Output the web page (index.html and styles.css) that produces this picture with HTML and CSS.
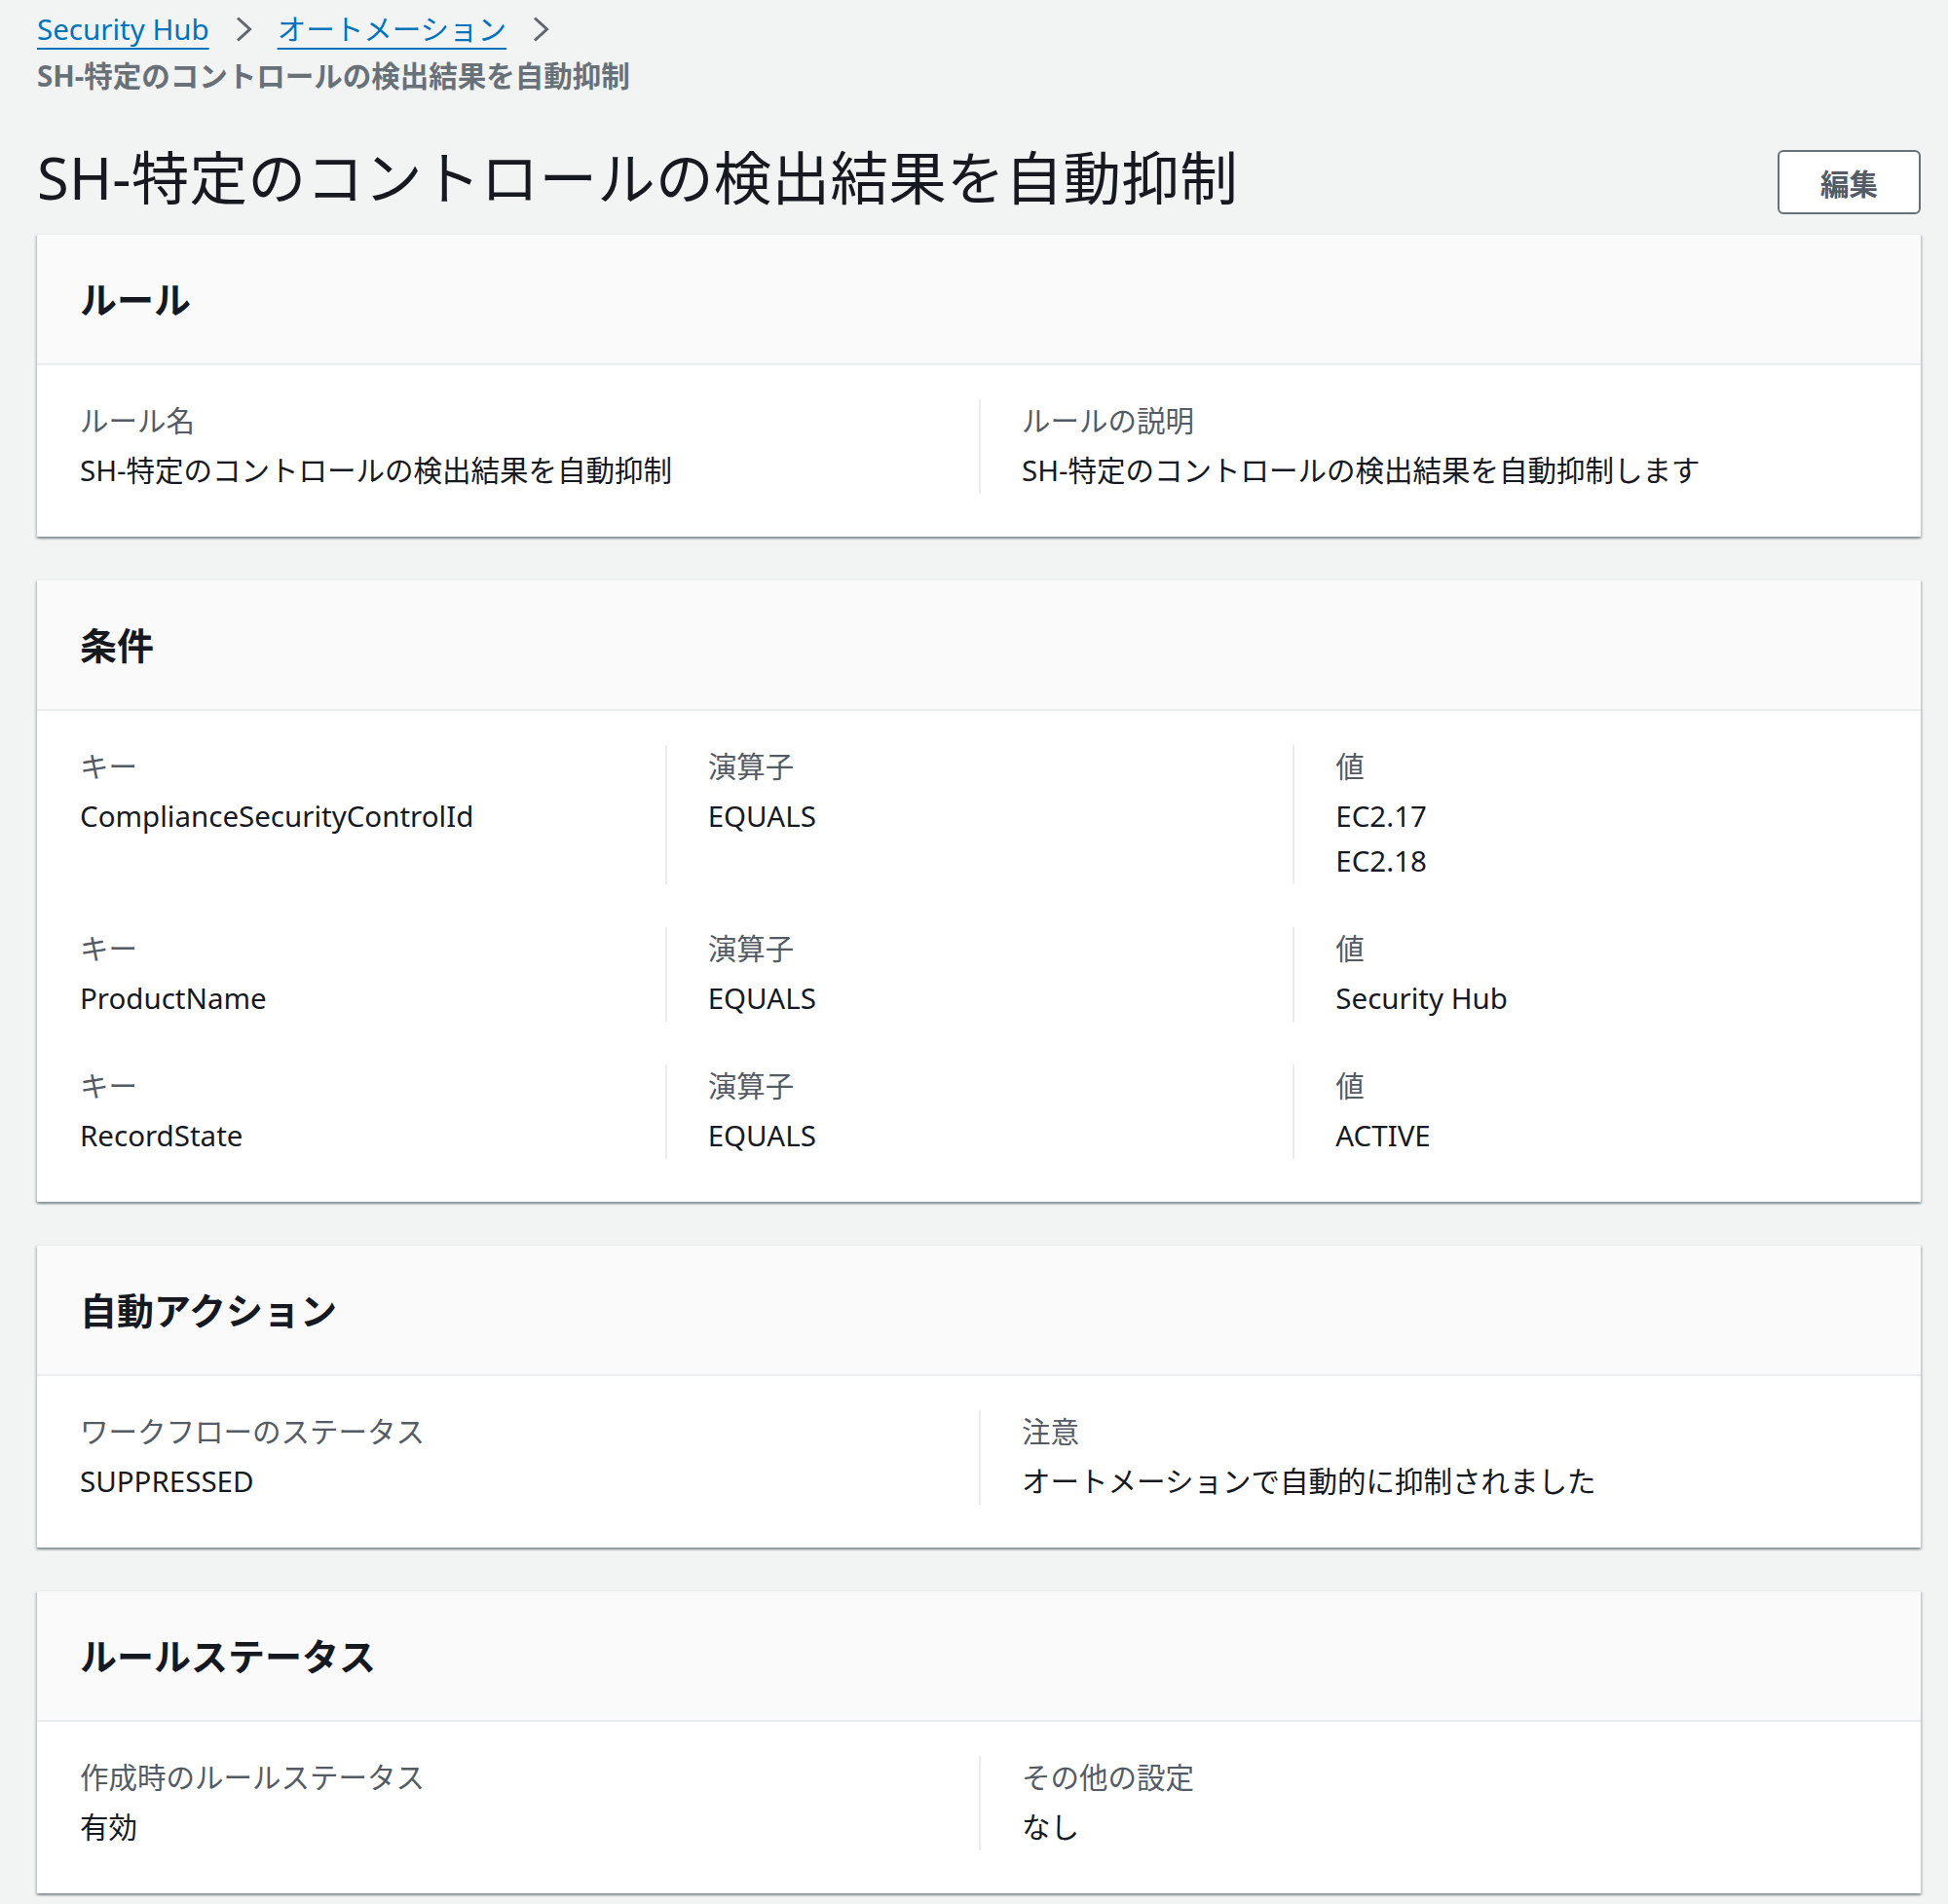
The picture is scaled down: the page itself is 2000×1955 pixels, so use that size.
FILE: index.html
```html
<!DOCTYPE html>
<html lang="ja">
<head>
<meta charset="utf-8">
<title>SH-特定のコントロールの検出結果を自動抑制</title>
<link rel="stylesheet" href="styles.css">
</head>
<body>
<div class="page">
  <nav class="crumbs">
    <div class="crumbs-line">
      <a class="crumb-link" href="#">Security Hub</a>
      <svg class="chev" width="20" height="28" viewBox="0 0 20 28"><polyline points="4,2.5 16.5,14 4,25.5" fill="none" stroke="#5f666d" stroke-width="3"/></svg>
      <a class="crumb-link" href="#">オートメーション</a>
      <svg class="chev" width="20" height="28" viewBox="0 0 20 28"><polyline points="4,2.5 16.5,14 4,25.5" fill="none" stroke="#5f666d" stroke-width="3"/></svg>
    </div>
    <div class="crumb-current">SH-特定のコントロールの検出結果を自動抑制</div>
  </nav>

  <header class="page-header">
    <h1>SH-特定のコントロールの検出結果を自動抑制</h1>
    <button class="btn">編集</button>
  </header>

  <section class="card">
    <div class="card-header"><h2>ルール</h2></div>
    <div class="card-body">
      <div class="grid two">
        <div class="cell">
          <div class="label">ルール名</div>
          <div class="value">SH-特定のコントロールの検出結果を自動抑制</div>
        </div>
        <div class="cell div">
          <div class="label">ルールの説明</div>
          <div class="value">SH-特定のコントロールの検出結果を自動抑制します</div>
        </div>
      </div>
    </div>
  </section>

  <section class="card">
    <div class="card-header"><h2>条件</h2></div>
    <div class="card-body">
      <div class="grid three">
        <div class="cell">
          <div class="label">キー</div>
          <div class="value">ComplianceSecurityControlId</div>
        </div>
        <div class="cell div">
          <div class="label">演算子</div>
          <div class="value">EQUALS</div>
        </div>
        <div class="cell div">
          <div class="label">値</div>
          <div class="value">EC2.17</div>
          <div class="value">EC2.18</div>
        </div>

        <div class="cell">
          <div class="label">キー</div>
          <div class="value">ProductName</div>
        </div>
        <div class="cell div">
          <div class="label">演算子</div>
          <div class="value">EQUALS</div>
        </div>
        <div class="cell div">
          <div class="label">値</div>
          <div class="value">Security Hub</div>
        </div>

        <div class="cell">
          <div class="label">キー</div>
          <div class="value">RecordState</div>
        </div>
        <div class="cell div">
          <div class="label">演算子</div>
          <div class="value">EQUALS</div>
        </div>
        <div class="cell div">
          <div class="label">値</div>
          <div class="value">ACTIVE</div>
        </div>
      </div>
    </div>
  </section>

  <section class="card">
    <div class="card-header"><h2>自動アクション</h2></div>
    <div class="card-body">
      <div class="grid two">
        <div class="cell">
          <div class="label">ワークフローのステータス</div>
          <div class="value">SUPPRESSED</div>
        </div>
        <div class="cell div">
          <div class="label">注意</div>
          <div class="value">オートメーションで自動的に抑制されました</div>
        </div>
      </div>
    </div>
  </section>

  <section class="card">
    <div class="card-header"><h2>ルールステータス</h2></div>
    <div class="card-body">
      <div class="grid two">
        <div class="cell">
          <div class="label">作成時のルールステータス</div>
          <div class="value">有効</div>
        </div>
        <div class="cell div">
          <div class="label">その他の設定</div>
          <div class="value">なし</div>
        </div>
      </div>
    </div>
  </section>
</div>
</body>
</html>
```

FILE: styles.css
```css
html, body {
  margin: 0;
  padding: 0;
  background: #f2f3f3;
}

body {
  font-family: "Noto Sans", "Noto Sans CJK JP", sans-serif;
  color: #16191f;
}

.page {
  padding: 6px 28px 0 38px;
}

.crumbs-line {
  display: flex;
  align-items: center;
  gap: 25px;
  height: 48px;
  font-size: 29.5px;
  line-height: 48px;
}

.crumb-link {
  color: #0073bb;
  text-decoration: underline;
  text-decoration-thickness: 2px;
  text-underline-offset: 8px;
}

.chev {
  display: block;
}

.crumb-current {
  height: 48px;
  line-height: 48px;
  font-size: 29.5px;
  font-weight: 700;
  color: #687078;
}

.page-header {
  display: flex;
  justify-content: space-between;
  align-items: flex-start;
  margin-top: 48px;
  margin-bottom: 20px;
}

.page-header h1 {
  margin: 0;
  font-size: 59.5px;
  line-height: 64px;
  font-weight: 400;
  letter-spacing: 0.3px;
  color: #16191f;
}

.btn {
  margin-top: 4px;
  width: 147px;
  height: 66px;
  box-sizing: border-box;
  border: 2px solid #687078;
  border-radius: 6px;
  background: #fff;
  font-family: "Noto Sans", "Noto Sans CJK JP", sans-serif;
  font-size: 29.5px;
  font-weight: 700;
  color: #545b64;
  padding: 0;
}

.card {
  background: #fff;
  margin-bottom: 44px;
  box-shadow: 0 2px 2px 0 rgba(0, 28, 36, 0.3),
              2px 2px 2px 0 rgba(0, 28, 36, 0.12),
              -2px 2px 2px 0 rgba(0, 28, 36, 0.12);
  border-top: 1px solid #eaeded;
}

.card-header {
  background: #fafafa;
  padding: 44px 44px 44px;
  border-bottom: 2px solid #eaeded;
}

.card-header h2 {
  margin: 0;
  font-size: 38px;
  line-height: 44px;
  font-weight: 700;
  color: #16191f;
}

.card-body {
  padding: 35px 0 44px;
}

.grid {
  display: grid;
  row-gap: 44px;
}

.grid.two {
  grid-template-columns: 1fr 1fr;
}

.grid.three {
  grid-template-columns: 1fr 1fr 1fr;
}

.cell {
  padding: 0 44px 1px 44px;
}

.cell.div {
  border-left: 2px solid #eaeded;
  padding-left: 42px;
}

.label {
  font-size: 29.5px;
  line-height: 44px;
  color: #545b64;
  margin-bottom: 6px;
}

.value {
  font-size: 29.5px;
  line-height: 46px;
  color: #16191f;
}
```
